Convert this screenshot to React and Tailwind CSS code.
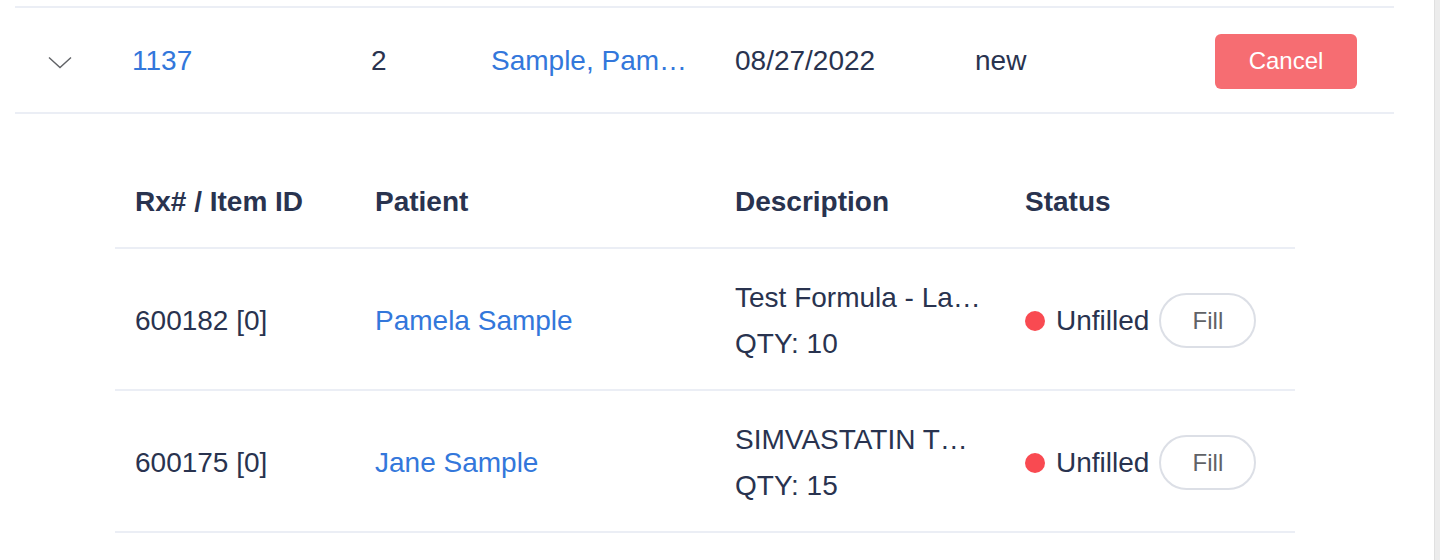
const items = [
  { rx: '600182 [0]', patient: 'Pamela Sample', desc: 'Test Formula - La…', qty: 10 },
  { rx: '600175 [0]', patient: 'Jane Sample', desc: 'SIMVASTATIN T…', qty: 15 },
];

const Chevron = () => (
  <svg width="24" height="13" viewBox="0 0 24 13" fill="none">
    <path d="M1 1.5 L12 11.5 L23 1.5" stroke="#606266" strokeWidth="1.4" />
  </svg>
);

const SubRow = ({ item }) => (
  <div className="flex items-center h-[142px] border-b-2 border-[#ebeef5] pt-[3px]">
    <div className="w-[260px] pl-[20px]">{item.rx}</div>
    <div className="w-[360px] text-[#3377db]">{item.patient}</div>
    <div className="w-[290px] pr-[20px] pt-[1px] leading-[46px]">
      <div className="truncate whitespace-nowrap">{item.desc}</div>
      <div>QTY: {item.qty}</div>
    </div>
    <div className="flex items-center">
      <span className="w-[20px] h-[20px] rounded-full bg-[#f94a51]" />
      <span className="ml-[11px]">Unfilled</span>
      <button className="ml-[10px] w-[97px] h-[55px] rounded-full border-2 border-[#dcdfe6] bg-white text-[24px] text-[#606266]">
        Fill
      </button>
    </div>
  </div>
);

export default function App() {
  return (
    <div
      className="flex h-[560px] bg-white overflow-hidden text-[28px] text-[#29334f]"
      style={{ fontFamily: '"Liberation Sans", Arial, sans-serif' }}
    >
      <div className="flex-1 pl-[15px] pt-[6px]">
        <div className="w-[1379px]">
          <div className="flex items-center h-[108px] border-y-2 border-[#ebeef5] pt-[2px]">
            <div className="w-[97px] pl-[33px] pt-[3px] flex">
              <Chevron />
            </div>
            <div className="w-[239px] pl-[20px] text-[#3377db]">1137</div>
            <div className="w-[120px] pl-[20px]">2</div>
            <div className="w-[244px] pl-[20px] pr-[20px] truncate whitespace-nowrap text-[#3377db]">Sample, Pam…</div>
            <div className="w-[240px] pl-[20px]">08/27/2022</div>
            <div className="w-[240px] pl-[20px]">new</div>
            <div className="pl-[20px]">
              <button className="w-[142px] h-[55px] rounded-[6px] bg-[#f66d72] text-white text-[24px]">Cancel</button>
            </div>
          </div>
          <div className="pl-[100px] pt-[43px]">
            <div className="w-[1180px]">
              <div className="flex items-center h-[92px] border-b-2 border-[#ebeef5] font-bold">
                <div className="w-[260px] pl-[20px]">Rx# / Item ID</div>
                <div className="w-[360px]">Patient</div>
                <div className="w-[290px]">Description</div>
                <div>Status</div>
              </div>
              {items.map((item) => (
                <SubRow key={item.rx} item={item} />
              ))}
            </div>
          </div>
        </div>
      </div>
      <div className="w-[6px] bg-[#ececec] border-l border-[#e0e0e0]" />
    </div>
  );
}
